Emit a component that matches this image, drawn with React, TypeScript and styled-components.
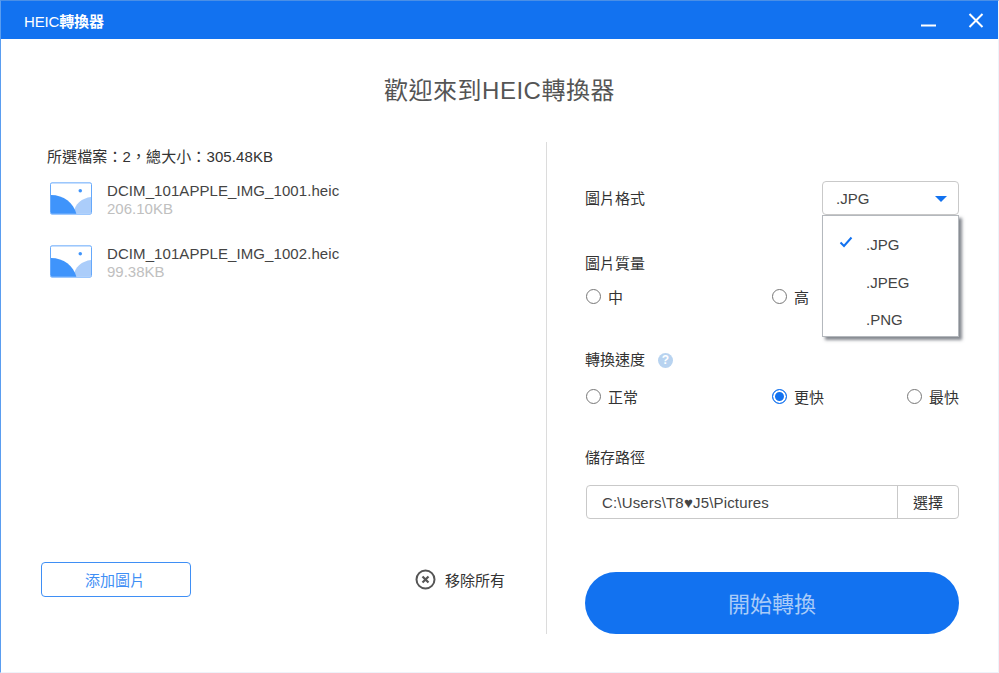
import { createGlobalStyle } from "styled-components";
import styled from "styled-components";

const GlobalStyle = createGlobalStyle`
  html, body {
    margin: 0;
    padding: 0;
    background: #fff;
  }
  body {
    font-family: "Liberation Sans", "Noto Sans CJK TC", sans-serif;
  }
`;

const Window = styled.div`
  width: 999px;
  height: 673px;
  box-sizing: border-box;
  display: flex;
  flex-direction: column;
  overflow: hidden;
  background: #fff;
  border-top: 1px solid #4a8fe6;
  border-left: 1px solid #5a9df0;
  border-right: 1px solid #eef3fa;
  border-bottom: 1px solid #eef3fa;
`;

const TitleBar = styled.div`
  height: 38px;
  flex: none;
  margin-left: -1px;
  margin-right: -1px;
  background: #1272f0;
  color: #fff;
  display: flex;
  align-items: center;
  padding: 0 14px 0 24px;
`;

const TitleText = styled.div`
  flex: 1;
  font-size: 15px;
  letter-spacing: -0.15px;
`;

const TitleStrong = styled.span`
  font-weight: bold;
`;

const WindowButton = styled.button`
  border: 0;
  padding: 0;
  background: none;
  display: block;
  width: 18px;
  height: 18px;
  margin-left: 29px;
`;

const Heading = styled.h1`
  margin: 0;
  padding-top: 36px;
  height: 67px;
  box-sizing: content-box;
  text-align: center;
  font-size: 24px;
  letter-spacing: 0.5px;
  line-height: 32px;
  font-weight: normal;
  color: #555;
`;

const Body = styled.div`
  display: flex;
  height: 492px;
`;

const LeftPane = styled.div`
  width: 464px;
  margin-left: 40px;
  display: flex;
  flex-direction: column;
`;

const Divider = styled.div`
  width: 1px;
  margin-left: 41px;
  background: #dcdcdc;
`;

const Summary = styled.div`
  margin-left: 6px;
  margin-top: 6px;
  font-size: 15px;
  letter-spacing: 0.1px;
  line-height: 18px;
  color: #333;
`;

const FileList = styled.div`
  flex: 1;
  display: flex;
  flex-direction: column;
  gap: 29px;
  margin-top: 15px;
  margin-left: 9px;
`;

const FileRow = styled.div`
  display: flex;
  align-items: center;
  gap: 15px;
  height: 34px;
`;

const FileInfo = styled.div`
  margin-top: 2px;
`;

const FileName = styled.div`
  font-size: 15px;
  letter-spacing: 0.08px;
  line-height: 19px;
  color: #444;
`;

const FileSize = styled.div`
  font-size: 15px;
  line-height: 18px;
  color: #c0c0c0;
`;

const LeftFooter = styled.div`
  display: flex;
  align-items: center;
  justify-content: space-between;
  margin-bottom: 37px;
`;

const AddButton = styled.button`
  width: 150px;
  height: 35px;
  box-sizing: border-box;
  padding: 0 2px 0 0;
  background: #fff;
  border: 1px solid #3f8ff5;
  border-radius: 4px;
  color: #3f8ff5;
  font-family: inherit;
  font-size: 15px;
`;

const RemoveAll = styled.div`
  display: flex;
  align-items: center;
  gap: 9px;
  font-size: 15px;
  color: #333;
`;

const RightPane = styled.div`
  width: 374px;
  margin-left: 38px;
  position: relative;
  display: flex;
  flex-direction: column;
`;

const SettingLabel = styled.div<{ $top: number }>`
  margin-top: ${(p) => p.$top}px;
  height: 20px;
  font-size: 15px;
  line-height: 20px;
  color: #333;
  display: flex;
  align-items: center;
  gap: 13px;
`;

const FormatRow = styled.div`
  display: flex;
  align-items: center;
  justify-content: space-between;
  margin-top: 39px;
  height: 34px;
`;

const Select = styled.div`
  width: 137px;
  height: 34px;
  box-sizing: border-box;
  border: 1px solid #c9c9c9;
  border-radius: 4px;
  display: flex;
  align-items: center;
  justify-content: space-between;
  padding: 1px 11px 0 13px;
  font-size: 15px;
  color: #444;
`;

const Caret = styled.span`
  width: 0;
  height: 0;
  border-left: 6px solid transparent;
  border-right: 6px solid transparent;
  border-top: 6px solid #1272f0;
`;

const Menu = styled.div`
  position: absolute;
  top: 73px;
  right: 0;
  width: 137px;
  height: 122px;
  box-sizing: border-box;
  background: #fff;
  border: 1px solid #b4b8bd;
  box-shadow: 3px 3px 3px rgba(80, 85, 95, 0.7);
  padding-top: 10px;
`;

const MenuItem = styled.div`
  position: relative;
  height: 37.5px;
  line-height: 37.5px;
  padding-left: 43px;
  font-size: 15px;
  color: #444;
`;

const CheckMark = styled.svg`
  position: absolute;
  left: 16px;
  top: 10px;
`;

const RadioRow = styled.div<{ $top: number }>`
  margin-top: ${(p) => p.$top}px;
  height: 20px;
  padding-left: 1px;
  display: grid;
  grid-template-columns: 186px 135px 1fr;
`;

const RadioOption = styled.div`
  display: flex;
  align-items: center;
  gap: 7px;
  font-size: 15px;
  color: #333;
`;

const RadioDot = styled.span<{ $on?: boolean }>`
  width: 15px;
  height: 15px;
  box-sizing: border-box;
  border-radius: 50%;
  border: 1px solid ${(p) => (p.$on ? "#1272f0" : "#777")};
  background: ${(p) => (p.$on ? "#1272f0" : "#fff")};
  box-shadow: ${(p) => (p.$on ? "inset 0 0 0 2px #fff" : "none")};
`;

const HelpBadge = styled.span`
  width: 15px;
  height: 15px;
  border-radius: 50%;
  background: #b8d3f0;
  color: #fff;
  font-size: 12px;
  font-weight: bold;
  line-height: 15px;
  text-align: center;
`;

const PathBox = styled.div`
  margin-top: 17px;
  margin-left: 1px;
  height: 34px;
  box-sizing: border-box;
  border: 1px solid #c9c9c9;
  border-radius: 4px;
  display: flex;
  font-size: 15px;
  color: #444;
`;

const PathValue = styled.div`
  flex: 1;
  padding-left: 15px;
  letter-spacing: 0.17px;
  line-height: 34px;
`;

const PathButton = styled.div`
  width: 60px;
  border-left: 1px solid #c9c9c9;
  text-align: center;
  line-height: 34px;
  color: #333;
`;

const StartButton = styled.button`
  margin-top: 53px;
  height: 62px;
  width: 374px;
  padding: 0 0 2px;
  border: 0;
  border-radius: 31px;
  background: #1272f0;
  color: #a9cbf8;
  font-family: inherit;
  font-size: 22px;
`;

const ImageIcon = () => (
  <svg width="42" height="33" viewBox="0 0 43 33">
    <rect x="0.5" y="0.5" width="42" height="32" rx="1.5" fill="#fff" stroke="#61a6fb" />
    <circle cx="31" cy="8.5" r="1.8" fill="#3f94fb" />
    <path d="M24 32 C25 22 33 16 42 15 V31 a1 1 0 0 1 -1 1 Z" fill="#abcdfa" />
    <path d="M1 13 C14 13 24 21 27 32 H2 a1 1 0 0 1 -1 -1 Z" fill="#3f94fb" />
  </svg>
);

const App = () => (
  <>
    <GlobalStyle />
    <Window>
      <TitleBar>
        <TitleText>
          HEIC<TitleStrong>轉換器</TitleStrong>
        </TitleText>
        <WindowButton aria-label="minimize">
          <svg width="18" height="18" viewBox="0 0 18 18">
            <path d="M1 14.5 H16" stroke="#fff" strokeWidth="2" />
          </svg>
        </WindowButton>
        <WindowButton aria-label="close">
          <svg width="18" height="18" viewBox="0 0 18 18">
            <path d="M2.5 3 L15.5 16 M15.5 3 L2.5 16" stroke="#fff" strokeWidth="2" />
          </svg>
        </WindowButton>
      </TitleBar>
      <Heading>歡迎來到HEIC轉換器</Heading>
      <Body>
        <LeftPane>
          <Summary>所選檔案：2，總大小：305.48KB</Summary>
          <FileList>
            <FileRow>
              <ImageIcon />
              <FileInfo>
                <FileName>DCIM_101APPLE_IMG_1001.heic</FileName>
                <FileSize>206.10KB</FileSize>
              </FileInfo>
            </FileRow>
            <FileRow>
              <ImageIcon />
              <FileInfo>
                <FileName>DCIM_101APPLE_IMG_1002.heic</FileName>
                <FileSize>99.38KB</FileSize>
              </FileInfo>
            </FileRow>
          </FileList>
          <LeftFooter>
            <AddButton>添加圖片</AddButton>
            <RemoveAll>
              <svg width="21" height="21" viewBox="0 0 21 21">
                <circle cx="10.5" cy="10.5" r="9" fill="none" stroke="#555" strokeWidth="2" />
                <path d="M7.5 7.5 L13.5 13.5 M13.5 7.5 L7.5 13.5" stroke="#555" strokeWidth="2.2" />
              </svg>
              移除所有
            </RemoveAll>
          </LeftFooter>
        </LeftPane>
        <Divider />
        <RightPane>
          <FormatRow>
            <SettingLabel $top={2}>圖片格式</SettingLabel>
            <Select>
              .JPG
              <Caret />
            </Select>
          </FormatRow>
          <Menu>
            <MenuItem>
              <CheckMark width="14" height="12" viewBox="0 0 14 12">
                <path d="M1.5 6.5 L5 10 L12.5 1.5" fill="none" stroke="#1272f0" strokeWidth="2" />
              </CheckMark>
              .JPG
            </MenuItem>
            <MenuItem>.JPEG</MenuItem>
            <MenuItem>.PNG</MenuItem>
          </Menu>
          <SettingLabel $top={39}>圖片質量</SettingLabel>
          <RadioRow $top={12}>
            <RadioOption>
              <RadioDot />中
            </RadioOption>
            <RadioOption>
              <RadioDot />高
            </RadioOption>
          </RadioRow>
          <SettingLabel $top={44}>
            轉換速度 <HelpBadge>?</HelpBadge>
          </SettingLabel>
          <RadioRow $top={16}>
            <RadioOption>
              <RadioDot />正常
            </RadioOption>
            <RadioOption>
              <RadioDot $on />更快
            </RadioOption>
            <RadioOption>
              <RadioDot />最快
            </RadioOption>
          </RadioRow>
          <SettingLabel $top={42}>儲存路徑</SettingLabel>
          <PathBox>
            <PathValue>C:\Users\T8♥J5\Pictures</PathValue>
            <PathButton>選擇</PathButton>
          </PathBox>
          <StartButton>開始轉換</StartButton>
        </RightPane>
      </Body>
    </Window>
  </>
);

export default App;
